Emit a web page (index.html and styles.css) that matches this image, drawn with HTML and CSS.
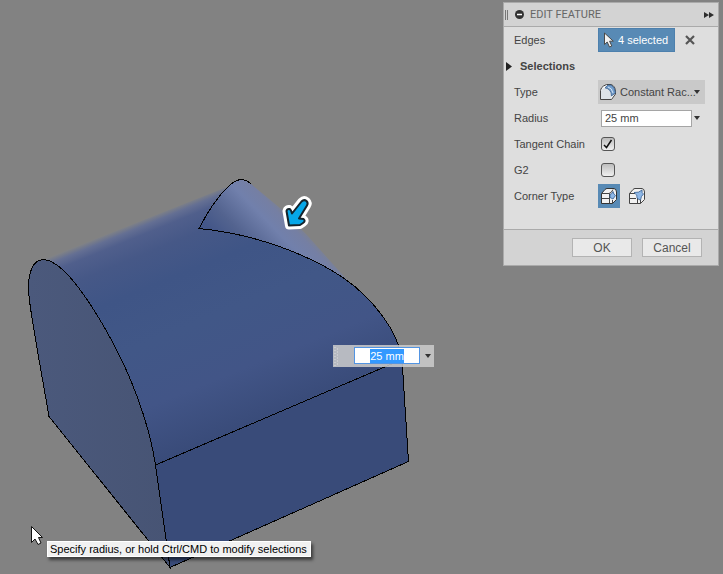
FILE: index.html
```html
<!DOCTYPE html>
<html lang="en">
<head>
<meta charset="utf-8">
<title>Edit Feature</title>
<link rel="stylesheet" href="styles.css">
</head>
<body>
<main class="viewport">
  <svg class="model" viewBox="0 0 723 574" preserveAspectRatio="xMinYMin slice" aria-hidden="true">
    <defs>
      <linearGradient id="top" gradientUnits="userSpaceOnUse" x1="120" y1="229" x2="207" y2="443">
        <stop offset="0" stop-color="#808286"/>
        <stop offset=".025" stop-color="#646f93"/>
        <stop offset=".06" stop-color="#505f8c"/>
        <stop offset=".14" stop-color="#465887"/>
        <stop offset=".28" stop-color="#3f5586"/>
        <stop offset=".5" stop-color="#415787"/>
        <stop offset=".76" stop-color="#425587"/>
        <stop offset="1" stop-color="#394b79"/>
      </linearGradient>
      <linearGradient id="corner" gradientUnits="userSpaceOnUse" x1="294" y1="221" x2="238" y2="275">
        <stop offset="0" stop-color="#7c8192"/>
        <stop offset=".07" stop-color="#757fa3"/>
        <stop offset=".25" stop-color="#7180ac"/>
        <stop offset=".6" stop-color="#53638f"/>
        <stop offset=".85" stop-color="#435688"/>
      </linearGradient>
      <linearGradient id="side" x1="0" y1="0" x2="1" y2="0">
        <stop offset="0" stop-color="#4b597c"/>
        <stop offset="1" stop-color="#475474"/>
      </linearGradient>
    </defs>
    <path fill="url(#top)" d="M43 259.500 L228 186.500 Q240 176 251 184 L345 279 C373 299 398 331 402 359 L155.500 465 C149 422 130 372 107 332 C82 288 60 260 43 259.500Z"/>
    <path fill="url(#corner)" d="M199 228.500 C207 213 216 198 228 187 Q240 174 251 184 L280 208 L307 235 L348 281 C310 255 256 234 199 228.500Z"/>
    <path fill="#394b79" d="M155.500 465 L402 359.500 L408.500 461.500 L170 567.500Z"/>
    <path fill="url(#side)" d="M43 259.500 C32 260 27 275 29 296 C31 318 42 375 49 416.500 L170 567.500 L155.500 465 C149 422 130 372 107 332 C82 288 60 260 43 259.500Z"/>
    <g class="edges">
      <path d="M43 259.500 C32 260 27 275 29 296 C31 318 42 375 49 416.500 L170 567.500 L155.500 465 C149 422 130 372 107 332 C82 288 60 260 43 259.500Z"/>
      <path d="M251 184 Q240 174 228 187 C216 198 207 213 199 228.500 C256 234 310 255 345 279 C373 299 398 331 402 359 L408.500 461.500 L170 567.500"/>
      <path d="M155.500 465 L402 359.500"/>
    </g>
    <g stroke-linejoin="round">
      <path fill="#fff" stroke="#fff" stroke-width="8" d="M289 225.500 L286.500 211 Q287 208.500 289.500 209 Q291 209.500 292 213.500 L301.500 201.500 Q304 199 306.500 201 Q308.500 203 307 205.500 L299 218.500 L303.500 219 Q306 221 303 223 L300 225Z"/>
      <path fill="#06a7e8" stroke="#15232b" stroke-width="2" d="M289 225.500 L286.500 211 Q287 208.500 289.500 209 Q291 209.500 292 213.500 L301.500 201.500 Q304 199 306.500 201 Q308.500 203 307 205.500 L299 218.500 L303.500 219 Q306 221 303 223 L300 225Z"/>
    </g>
    <path fill="#fff" stroke="#111" stroke-width="1" stroke-linejoin="round" d="M31.500 526.500 V542.500 L35 539 L38 544.500 L41 543 L38.500 537.500 H42.500Z"/>
  </svg>

  <form class="panel" aria-label="Edit feature" onsubmit="return false">
    <header class="panel-head">
      <span class="grip"></span>
      <button class="plain" type="button" aria-label="Collapse"><svg width="9" height="9" viewBox="0 0 9 9"><circle cx="4.500" cy="4.500" r="4.500" fill="#333"/><path d="M2 4.500h5" stroke="#fff" stroke-width="1.500"/></svg></button>
      <h1>EDIT FEATURE</h1>
      <button class="plain" type="button" aria-label="Dock"><svg width="10" height="6" viewBox="0 0 10 6"><path d="M0 0L5 3L0 6ZM5 0L10 3L5 6Z" fill="#2d2d2d"/></svg></button>
    </header>

    <div class="fields">
      <div class="row">
        <span class="label">Edges</span>
        <button class="picked" type="button"><svg width="10" height="16" viewBox="0 0 10 16"><path fill="#f2f2f2" stroke="#4a4a4a" d="M.5 1v11.500l2.700-2.500 2.300 5 2.300-1-2.200-4.800h3.700Z"/></svg>4 selected</button>
        <button class="plain clear" type="button" aria-label="Clear edges"><svg width="10" height="10" viewBox="0 0 10 10"><path d="M1 1L9 9M9 1L1 9" stroke="#555" stroke-width="2.200"/></svg></button>
      </div>
      <button class="group" type="button"><svg width="6" height="9" viewBox="0 0 6 9"><path d="M0 0L6 4.500L0 9Z" fill="#222"/></svg>Selections</button>
      <div class="row">
        <label class="label" for="type">Type</label>
        <div class="type">
          <svg width="16" height="16" viewBox="0 0 16 16"><path fill="#f8f8f8" stroke="#444" d="M.5 6.500Q1 3.500 3.500 2L6.500.500H11Q15.500 2 15.500 8V10L11.500 15.500H.5Z"/><path fill="#dce2e7" d="M1 7Q2 4 5 4Q11 5 11 11V15H1Z"/><path fill="#729dcc" stroke="#365b86" stroke-width=".8" d="M5 3.800L8 1H11Q15 3 15.300 8V9L11.500 12Q11.500 5 5 3.800Z"/><path fill="none" stroke="#d4e4f4" d="M8 3Q12 4 13 9"/></svg>
          <select id="type"><option>Constant Rac...</option></select>
          <svg class="caret" width="6" height="4" viewBox="0 0 6 4"><path d="M0 0H6L3 4Z" fill="#333"/></svg>
        </div>
      </div>
      <div class="row">
        <label class="label" for="radius">Radius</label>
        <input class="radius" id="radius" type="text" value="25 mm">
        <button class="plain drop" type="button" aria-label="Radius values"><svg width="6" height="4" viewBox="0 0 6 4"><path d="M0 0H6L3 4Z" fill="#333"/></svg></button>
      </div>
      <div class="row">
        <label class="label" for="tangent">Tangent Chain</label>
        <span class="check"><input id="tangent" type="checkbox" checked><svg width="10" height="10" viewBox="0 0 10 10"><path d="M1 6L3.500 8.500L8.500 1" fill="none" stroke="#111" stroke-width="1.500"/></svg></span>
      </div>
      <div class="row">
        <label class="label" for="g2">G2</label>
        <span class="check"><input id="g2" type="checkbox"></span>
      </div>
      <div class="row">
        <span class="label">Corner Type</span>
        <button class="corner on" type="button" aria-pressed="true" aria-label="Rolling ball"><svg width="16" height="16" viewBox="0 0 16 16"><path fill="#f2f2f2" stroke="#333" d="M.5 5.500L4 1.500Q5 .500 6 .500H13Q15.500 1 15.500 4V11.500L11.500 15.500H.5Z"/><path fill="none" stroke="#444" d="M.5 5.500H8Q10.500 5 12 1.500M.5 10.500H9M8.500 5.500V15.500M11.500 12V15.500"/><path fill="#8eb8e8" stroke="#315a8e" stroke-width=".8" d="M9 6.500Q11 6 12 3.500Q12.500 6.500 14.500 7.500L12 11L9 9.500Z"/></svg></button>
        <button class="corner" type="button" aria-pressed="false" aria-label="Setback"><svg width="16" height="16" viewBox="0 0 16 16"><path fill="#f2f2f2" stroke="#444" d="M.5 5.500L4 1.500Q5 .500 6 .500H13Q15.500 1 15.500 4V11.500L11.500 15.500H.5Z"/><path fill="none" stroke="#444" d="M.5 5.500H6M.5 10.500H7M8.500 10V15.500M11.500 12V15.500"/><path fill="#8eb8e8" stroke="#315a8e" stroke-width=".8" d="M5 4.500Q10 5 13 2Q12.500 5 14.500 6Q12 8 11.500 12Q10 12 8 10Q9 7 5 4.500Z"/></svg></button>
      </div>
    </div>

    <footer class="actions">
      <button type="submit">OK</button>
      <button type="button">Cancel</button>
    </footer>
  </form>

  <div class="value-box">
    <svg width="5" height="20" viewBox="0 0 5 20" aria-hidden="true"><path d="M1 1V20M3.500 2.500V20" stroke="#dedede" stroke-dasharray="1 2"/></svg>
    <input type="text" value="25 mm" aria-label="Radius value">
    <button class="plain" type="button" aria-label="Values"><svg width="6" height="4" viewBox="0 0 6 4"><path d="M0 0H6L3 4Z" fill="#333"/></svg></button>
  </div>

  <div class="tip" role="tooltip">Specify radius, or hold Ctrl/CMD to modify selections</div>
</main>
</body>
</html>
```
FILE: styles.css
```css
* { box-sizing: border-box; }

body {
  margin: 0;
  font: 11px/14px "Liberation Sans", Arial, sans-serif;
  color: #444;
}

button, input, select {
  margin: 0;
  padding: 0;
  font: inherit;
  color: inherit;
}

svg { display: block; flex: none; }

.viewport {
  position: relative;
  height: 100vh;
  overflow: hidden;
  background: #828282;
}

.model { width: 100%; height: 100%; }

.edges {
  fill: none;
  stroke: #000;
  stroke-width: 1;
  shape-rendering: crispEdges;
}

.plain {
  display: flex;
  border: 0;
  background: none;
}

/* Docked settings panel */
.panel {
  position: absolute;
  top: 2px;
  right: 4px;
  width: 216px;
  border: 1px solid #aaa;
  background: #dedede;
}

.panel-head {
  display: flex;
  align-items: center;
  height: 24px;
  padding: 0 4px 0 1px;
  border-bottom: 1px solid #aaa;
  background: #d3d3d3;
}

.grip {
  width: 3px;
  height: 10px;
  margin-right: 7px;
  border: solid #777;
  border-width: 0 1px;
}

.panel-head h1 {
  flex: 1;
  margin: 0 0 0 6px;
  font: 400 11px/14px Roboto, sans-serif;
  color: #666;
}

.fields { padding-bottom: 20px; }

.row {
  display: flex;
  align-items: center;
  height: 26px;
  padding-left: 10px;
}

.label { width: 84px; }

.picked {
  display: flex;
  align-items: center;
  gap: 4px;
  height: 24px;
  padding: 0 6px 0 5px;
  border: 1px solid #4d80ad;
  background: #588ab5;
  color: #fff;
}

.clear { margin-left: 10px; }

.group {
  display: flex;
  align-items: center;
  gap: 8px;
  height: 26px;
  padding-left: 2px;
  border: 0;
  background: none;
  font-weight: 700;
}

.type {
  display: flex;
  align-items: center;
  gap: 4px;
  width: 107px;
  height: 24px;
  padding: 0 5px 0 2px;
  background: #c9c9c9;
}

.type select {
  flex: 1;
  min-width: 0;
  border: 0;
  background: none;
  appearance: none;
}

.type .caret { margin-left: -8px; }

.radius {
  width: 91px;
  height: 17px;
  margin-left: 3px;
  padding: 0 3px;
  border: 1px solid #a5a5a5;
  background: #fff;
}

.drop { margin-left: 2px; }

.check {
  display: grid;
  place-items: center;
  margin-left: 3px;
}

.check > * { grid-area: 1 / 1; }
.check svg { pointer-events: none; }
.check input:not(:checked) + svg { visibility: hidden; }

.check input {
  width: 14px;
  height: 14px;
  border: 1px solid #555;
  border-radius: 3px;
  background: linear-gradient(#bdbdbd, #f0f0f0);
  appearance: none;
}

.corner {
  display: grid;
  place-items: center;
  width: 22px;
  height: 24px;
  margin-right: 6px;
  border: 0;
  background: none;
}

.corner.on { background: #588ab5; }

.actions {
  display: flex;
  justify-content: flex-end;
  gap: 10px;
  padding: 8px 16px;
  border-top: 1px solid #aaa;
  background: #d3d3d3;
}

.actions button {
  width: 60px;
  height: 19px;
  border: 1px solid #b3b3b3;
  background: #e9e9e9;
  font-size: 12px;
  color: #555;
}

/* Floating value input on the canvas */
.value-box {
  position: absolute;
  top: 345px;
  left: 333px;
  display: flex;
  align-items: center;
  height: 22px;
  padding: 0 3px 1px 1px;
  background: rgb(205 205 205 / 85%);
}

.value-box input {
  width: 66px;
  height: 17px;
  margin: 0 5px 0 15px;
  border: 1px solid #5294e2;
  background: linear-gradient(#39f, #39f) center / 34px 14px no-repeat #fff;
  color: #fff;
  text-align: center;
}

.tip {
  position: absolute;
  top: 541px;
  left: 47px;
  padding: 1px 3px 1px 2px;
  border: 1px solid #fff;
  background: #f1f1f1;
  box-shadow: 2px 3px 3px rgb(0 0 0 / 55%);
  font: 11px/12px "Liberation Sans", sans-serif;
  color: #000;
  white-space: nowrap;
}
```
